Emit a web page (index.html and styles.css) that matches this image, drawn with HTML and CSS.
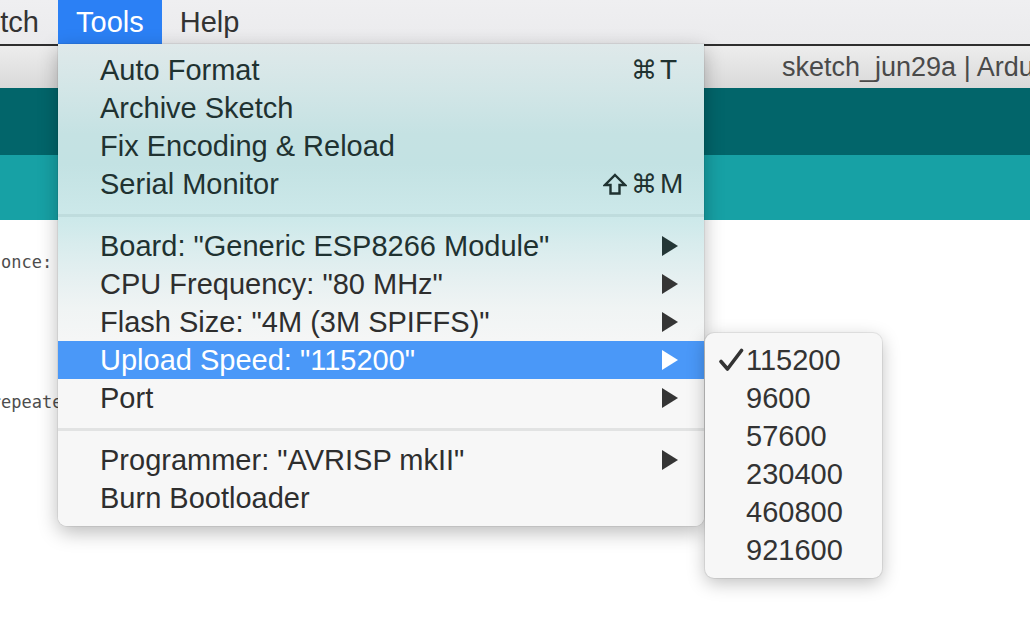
FILE: index.html
```html
<!DOCTYPE html>
<html lang="en">
<head>
<meta charset="utf-8">
<title>sketch_jun29a | Arduino</title>
<link rel="stylesheet" href="styles.css">
</head>
<body>
<div class="screen">
  <nav class="menubar">
    <span class="mb-first"><span>Sketch</span></span>
    <span class="mb-item active">Tools</span>
    <span class="mb-item">Help</span>
  </nav>
  <div class="titlebar"><span class="title">sketch_jun29a | Arduino</span></div>
  <div class="header"></div>
  <div class="toolbar"></div>
  <div class="editor">
    <div class="line">void setup() {</div>
    <div class="line">  // put your setup code here, to run once:</div>
    <div class="line">&nbsp;</div>
    <div class="line">}</div>
    <div class="line">&nbsp;</div>
    <div class="line">void loop() {</div>
    <div class="line">  // put your main code here, to run repeatedly:</div>
    <div class="line">&nbsp;</div>
    <div class="line">}</div>
  </div>
</div>

<div class="menu">
  <div class="group tinted">
    <div class="item"><span class="label">Auto Format</span><span class="sc"><span class="mods">⌘</span><span class="key">T</span></span></div>
    <div class="item"><span class="label">Archive Sketch</span></div>
    <div class="item"><span class="label">Fix Encoding &amp; Reload</span></div>
    <div class="item"><span class="label">Serial Monitor</span><span class="sc"><svg class="shift" viewBox="0 0 24 22" role="img" aria-label="Shift"><path d="M12 2 L22 12 L16.5 12 L16.5 20.5 L7.5 20.5 L7.5 12 L2 12 Z"/></svg><span class="mods">⌘</span><span class="key">M</span></span></div>
  </div>
  <div class="sep sep-tinted"></div>
  <div class="group">
    <div class="item tinted"><span class="label">Board: "Generic ESP8266 Module"</span><svg class="arrow" viewBox="0 0 16 20"><polygon points="0,0 16,10 0,20"/></svg></div>
    <div class="item"><span class="label">CPU Frequency: "80 MHz"</span><svg class="arrow" viewBox="0 0 16 20"><polygon points="0,0 16,10 0,20"/></svg></div>
    <div class="item"><span class="label">Flash Size: "4M (3M SPIFFS)"</span><svg class="arrow" viewBox="0 0 16 20"><polygon points="0,0 16,10 0,20"/></svg></div>
    <div class="item selected"><span class="label">Upload Speed: "115200"</span><svg class="arrow" viewBox="0 0 16 20"><polygon points="0,0 16,10 0,20"/></svg></div>
    <div class="item"><span class="label">Port</span><svg class="arrow" viewBox="0 0 16 20"><polygon points="0,0 16,10 0,20"/></svg></div>
  </div>
  <div class="sep"></div>
  <div class="group">
    <div class="item"><span class="label">Programmer: "AVRISP mkII"</span><svg class="arrow" viewBox="0 0 16 20"><polygon points="0,0 16,10 0,20"/></svg></div>
    <div class="item"><span class="label">Burn Bootloader</span></div>
  </div>
</div>

<div class="submenu">
  <div class="sub-item"><svg class="check" viewBox="0 0 26 24"><path d="M3 13.5 L9.5 21 L23.5 2.5"/></svg><span>115200</span></div>
  <div class="sub-item"><span class="check"></span><span>9600</span></div>
  <div class="sub-item"><span class="check"></span><span>57600</span></div>
  <div class="sub-item"><span class="check"></span><span>230400</span></div>
  <div class="sub-item"><span class="check"></span><span>460800</span></div>
  <div class="sub-item"><span class="check"></span><span>921600</span></div>
</div>
</body>
</html>
```

FILE: styles.css
```css
html, body {
  margin: 0;
  padding: 0;
}

body {
  width: 1030px;
  height: 634px;
  overflow: hidden;
  position: relative;
  background: #ffffff;
  font-family: "Liberation Sans", Arial, "DejaVu Sans", sans-serif;
}

.screen {
  width: 1030px;
  height: 634px;
  display: flex;
  flex-direction: column;
  overflow: hidden;
}

/* ---- system menu bar ---- */
.menubar {
  height: 44px;
  flex: none;
  display: flex;
  align-items: stretch;
  background: linear-gradient(to bottom, #efeff1, #ebebed);
  font-size: 29px;
  line-height: 44px;
  color: #333333;
}

.mb-first {
  width: 39px;
  margin-right: 19px;
  display: flex;
  justify-content: flex-end;
  overflow: hidden;
  white-space: nowrap;
}

.mb-item {
  padding: 0 18px;
  white-space: nowrap;
}

.mb-item.active {
  background: #2b80f5;
  color: #ffffff;
}

/* ---- window title bar ---- */
.titlebar {
  height: 42px;
  flex: none;
  border-top: 2px solid #2e2e2e;
  background: linear-gradient(to bottom, #ededed, #d9d9d9);
  display: flex;
  align-items: center;
  padding-left: 782px;
  white-space: nowrap;
  overflow: hidden;
}

.title {
  font-size: 27px;
  color: #4a4a4a;
}

.header {
  height: 67px;
  flex: none;
  background: #02656a;
}

.toolbar {
  height: 65px;
  flex: none;
  background: #17a1a5;
}

.editor {
  flex: 1;
  background: #ffffff;
  padding-top: 0;
  overflow: hidden;
  font-family: "DejaVu Sans Mono", "Liberation Mono", monospace;
  font-size: 17px;
  line-height: 28px;
  color: #4d4d4d;
}

.line {
  white-space: pre;
  margin-left: calc(1px - 38ch);
}

/* ---- Tools dropdown ---- */
.menu {
  position: absolute;
  left: 58px;
  top: 44px;
  width: 646px;
  height: 482px;
  box-sizing: border-box;
  padding-top: 7px;
  border-radius: 0 0 9px 9px;
  background: linear-gradient(to bottom,
    #dfe9ea 0px,
    #d3e6e7 44px,
    #c5e2e3 90px,
    #c3e2e3 120px,
    #cde9ea 176px,
    #d8eced 200px,
    #e6f0f1 235px,
    #f0f4f4 265px,
    #f5f6f6 295px,
    #f7f7f7 340px,
    #f7f7f7 482px);
  box-shadow: 0 6px 20px rgba(0, 0, 0, 0.28), 0 0 0 1px rgba(0, 0, 0, 0.06);
  color: #2e2e2e;
  font-size: 29px;
  z-index: 2;
}

.group.tinted .item,
.item.tinted {
  color: #1f3231;
}

.item {
  height: 38px;
  display: flex;
  align-items: center;
  padding: 0 26px 0 42px;
  white-space: nowrap;
}

.label {
  flex: 1;
}

.sc {
  display: flex;
  align-items: center;
}

.shift {
  width: 24px;
  height: 22px;
  margin-right: 4px;
  fill: none;
  stroke: #1f3231;
  stroke-width: 2.4;
  stroke-linejoin: miter;
}

.mods {
  font-family: "DejaVu Sans", sans-serif;
  font-size: 26px;
  letter-spacing: 1px;
}

.key {
  width: 18px;
  margin-left: 2px;
  font-size: 28px;
}

.arrow {
  width: 16px;
  height: 20px;
  fill: #353535;
}

.item.tinted .arrow {
  fill: #233636;
}

.item.selected {
  background: #4a98f8;
  color: #ffffff;
}

.item.selected .arrow {
  fill: #ffffff;
}

.sep {
  height: 3px;
  margin: 11px 0 10px;
  background: #e2e3e3;
}

.sep.sep-tinted {
  background: #bfdcdd;
}

/* ---- Upload speed submenu ---- */
.submenu {
  position: absolute;
  left: 705px;
  top: 333px;
  width: 177px;
  height: 245px;
  box-sizing: border-box;
  padding: 8px 0 9px 11px;
  border-radius: 9px;
  background: #f7f7f7;
  box-shadow: 0 5px 18px rgba(0, 0, 0, 0.25), 0 0 0 1px rgba(0, 0, 0, 0.07);
  color: #333333;
  font-size: 29px;
  z-index: 3;
}

.sub-item {
  height: 38px;
  display: flex;
  align-items: center;
}

.check {
  width: 30px;
  height: 24px;
  flex: none;
}

svg.check path {
  fill: none;
  stroke: #333333;
  stroke-width: 3.6;
  stroke-linecap: round;
  stroke-linejoin: round;
}
```
